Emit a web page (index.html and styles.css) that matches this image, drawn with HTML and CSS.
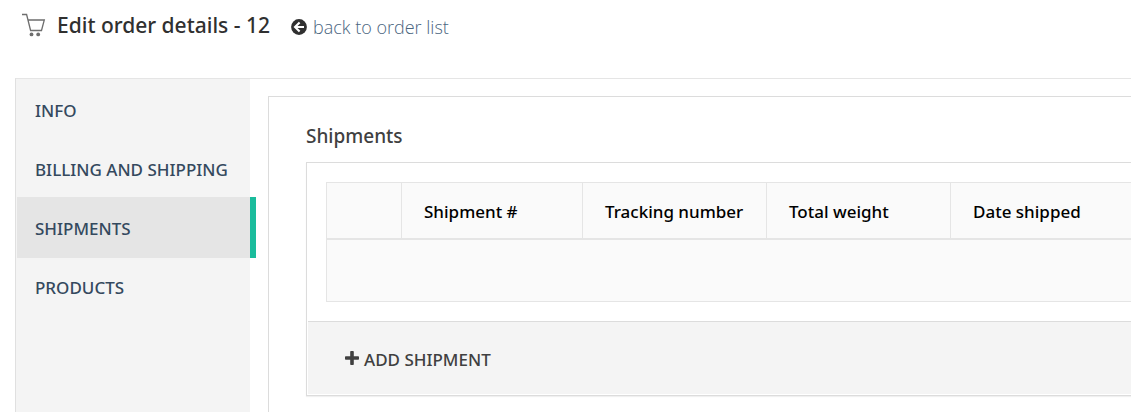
FILE: index.html
```html
<!DOCTYPE html>
<html lang="en">
<head>
<meta charset="utf-8">
<meta name="viewport" content="width=device-width, initial-scale=1">
<title>Edit order details - 12</title>
<link rel="stylesheet" href="styles.css">
</head>
<body>
<header class="page-header">
  <svg class="cart-icon" viewBox="0 0 24 24" aria-hidden="true">
    <path d="M0 1.5H4.6L8.6 17.5H19.5L22.3 7H6.2" fill="none" stroke="#6e6e6e" stroke-width="1.3"/>
    <circle cx="9.5" cy="21.4" r="1.9" fill="#6e6e6e"/>
    <circle cx="16.2" cy="21.4" r="1.9" fill="#6e6e6e"/>
  </svg>
  <h1 class="page-title">Edit order details - 12</h1>
  <div class="back">
    <svg class="back-icon" viewBox="0 0 16 16" aria-hidden="true">
      <circle cx="8" cy="8" r="7.9" fill="#303030"/>
      <path d="M8.6 3.4L4 8L8.6 12.6M4.4 8H13" fill="none" stroke="#fff" stroke-width="2.1"/>
    </svg>
    <a class="back-link" href="#orders">back to order list</a>
  </div>
</header>
<div class="layout">
  <nav class="tabs" aria-label="Order sections">
    <a class="tab" href="#info">INFO</a>
    <a class="tab" href="#billing">BILLING AND SHIPPING</a>
    <a class="tab tab-active" href="#shipments" aria-current="page">SHIPMENTS</a>
    <a class="tab" href="#products">PRODUCTS</a>
  </nav>
  <main class="panel">
    <h2 class="panel-title">Shipments</h2>
    <section class="card">
      <div class="card-body">
        <table class="grid">
          <thead>
            <tr>
              <th class="col-select"></th>
              <th class="col-shipment">Shipment #</th>
              <th class="col-wide">Tracking number</th>
              <th class="col-wide">Total weight</th>
              <th>Date shipped</th>
            </tr>
          </thead>
          <tbody>
            <tr><td colspan="5"></td></tr>
          </tbody>
        </table>
      </div>
      <footer class="card-footer">
        <button class="add" type="button">
          <svg class="plus-icon" viewBox="0 0 14 14" aria-hidden="true">
            <path d="M5.2 0.8Q5.2 0 6 0H8Q8.8 0 8.8 0.8V5.2H13.2Q14 5.2 14 6V8Q14 8.8 13.2 8.8H8.8V13.2Q8.8 14 8 14H6Q5.2 14 5.2 13.2V8.8H0.8Q0 8.8 0 8V6Q0 5.2 0.8 5.2H5.2Z" fill="#404040"/>
          </svg>
          <span>ADD SHIPMENT</span>
        </button>
      </footer>
    </section>
  </main>
</div>
</body>
</html>
```
FILE: styles.css
```css
* {
  box-sizing: border-box;
}

body {
  margin: 0;
  min-height: 100vh;
  display: flex;
  flex-direction: column;
  background: #fff;
  color: #404040;
  font-family: "Noto Sans", "Open Sans", sans-serif;
  font-size: 17px;
  line-height: 24px;
}

.page-header {
  display: flex;
  align-items: center;
  padding: 9px 22px 37px;
}

.cart-icon {
  width: 24px;
  height: 24px;
  flex: none;
}

.page-title {
  margin: 0 21px 0 11px;
  color: #303030;
  font-size: 21px;
  font-weight: 500;
  line-height: 32px;
}

.back {
  display: flex;
  align-items: center;
  gap: 6px;
  padding-top: 4px;
}

.back-icon {
  width: 16px;
  height: 16px;
}

.back-link {
  color: #4a6580;
  font-family: "Open Sans", "Noto Sans", sans-serif;
  font-size: 18px;
  font-weight: 300;
  text-decoration: none;
}

.layout {
  display: flex;
  flex: 1;
  margin-left: 15px;
  border-top: 1px solid #e5e5e5;
  border-left: 1px solid #e0e0e0;
}

.tabs {
  flex: none;
  width: 234px;
  padding-bottom: 20px;
  background: #f4f4f4;
}

.tab {
  display: block;
  margin: 0 0 -2px 1px;
  padding: 20px 18px 17px;
  color: #34495e;
  font-weight: 500;
  text-decoration: none;
  white-space: nowrap;
}

.tab-active {
  margin-right: -6px;
  background: #e5e5e5;
  border-right: 6px solid #1abc9c;
}

.panel {
  flex: 1;
  min-width: 0;
  margin: 17px 0 0 18px;
  padding: 27px 0 16px 37px;
  border: solid #dcdcdc;
  border-width: 1px 0 0 1px;
}

.panel-title {
  margin: 0 0 14px;
  font-size: 19px;
  font-weight: 500;
  line-height: 24px;
}

.card {
  border: 1px solid #dcdcdc;
  border-right: 0;
  box-shadow: 0 1px 1px #f0f0f0;
}

.card-body {
  padding: 19px 0 19px 19px;
}

.grid {
  width: 100%;
  table-layout: fixed;
  border-spacing: 0;
  border: 1px solid #e5e5e5;
  border-right: 0;
  background: #fafafa;
}

.grid th {
  height: 57px;
  padding: 2px 22px 0;
  border-bottom: 2px solid #e5e5e5;
  border-left: 1px solid #e5e5e5;
  color: #000;
  font-weight: 500;
  text-align: left;
  white-space: nowrap;
}

.grid th:first-child {
  border-left: 0;
}

.grid td {
  height: 61px;
  padding: 0;
}

.col-select {
  width: 74px;
}

.col-shipment {
  width: 181px;
}

.col-wide {
  width: 184px;
}

.card-footer {
  margin: 0 0 1px 1px;
  padding: 26px 37px 22px;
  border-top: 1px solid #dcdcdc;
  background: #f4f4f4;
}

.add {
  display: flex;
  align-items: center;
  gap: 5px;
  padding: 0;
  border: 0;
  background: none;
  color: #404040;
  font: inherit;
  font-weight: 500;
}

.plus-icon {
  width: 14px;
  height: 14px;
  margin-bottom: 4px;
}
```
